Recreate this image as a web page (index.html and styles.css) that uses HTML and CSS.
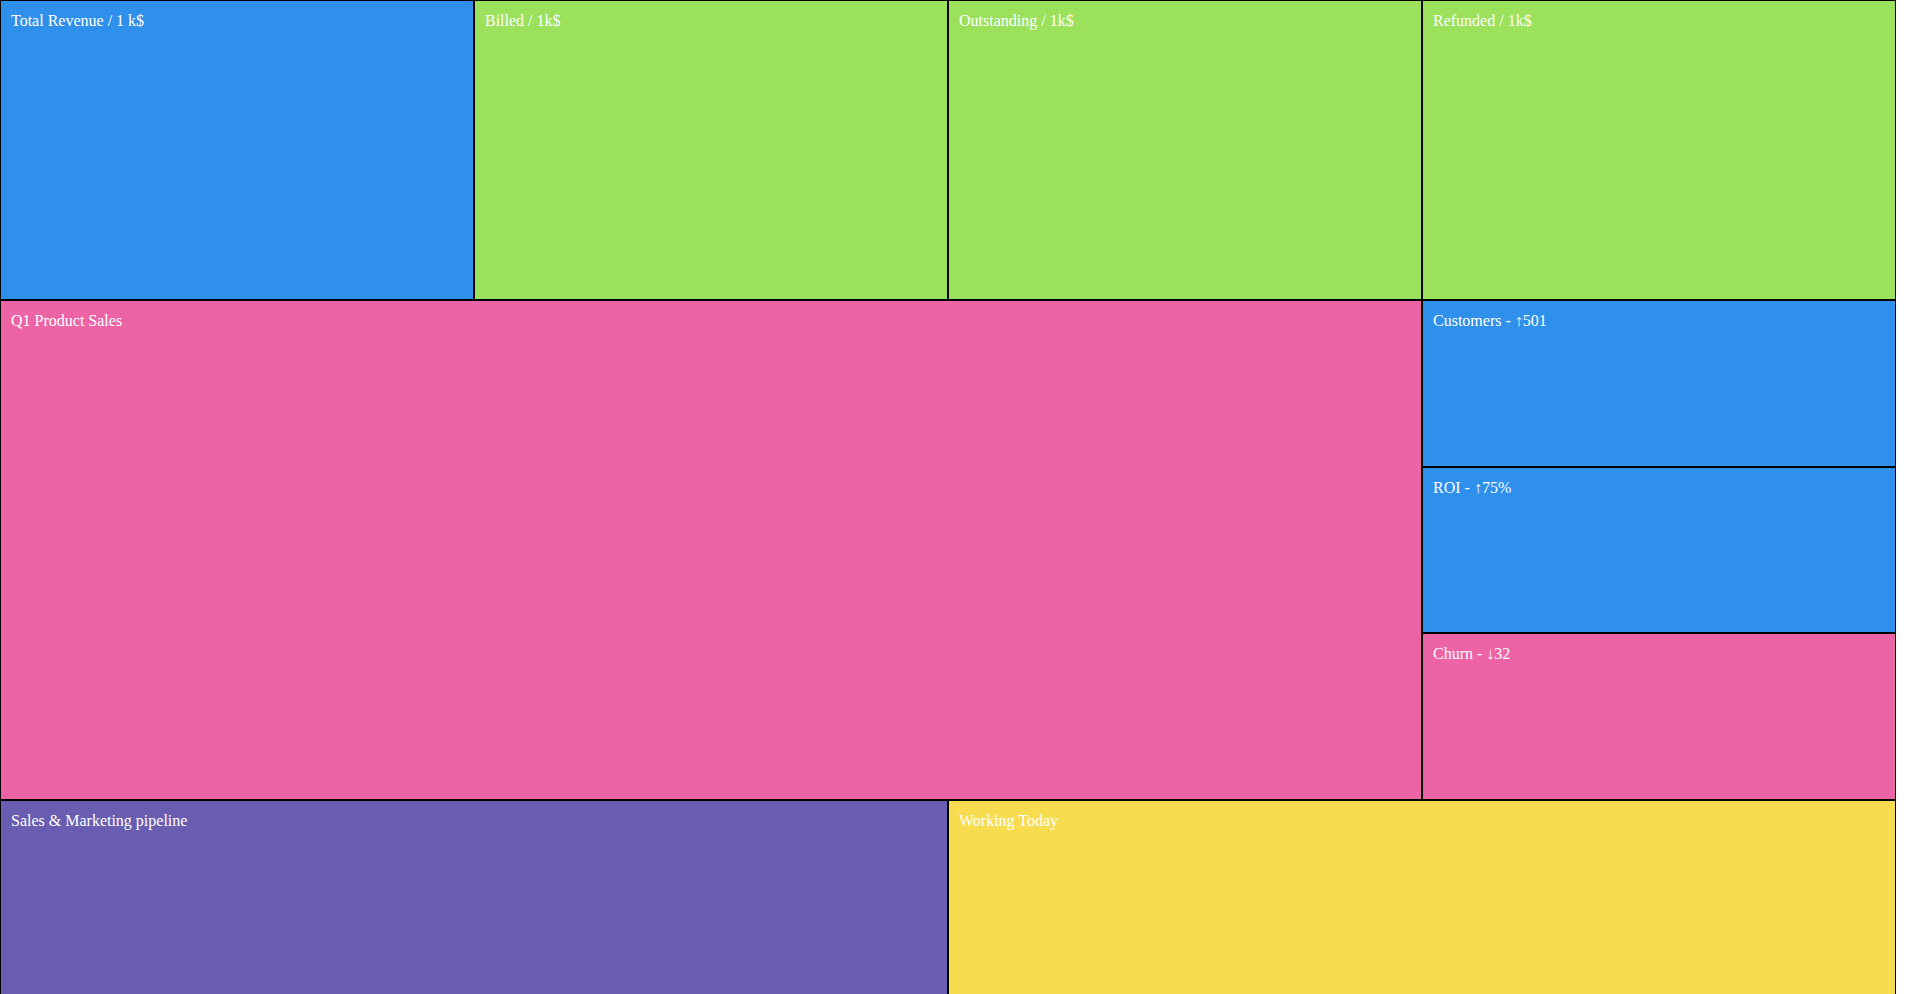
FILE: index.html
```html
<!DOCTYPE html>
<html>
<head>
<meta charset="utf-8">
<link rel="stylesheet" href="styles.css">
</head>
<body>
<div class="board">
  <div class="tile blue">Total Revenue / 1 k$</div>
  <div class="tile green">Billed / 1k$</div>
  <div class="tile green">Outstanding / 1k$</div>
  <div class="tile green">Refunded / 1k$</div>
  <div class="tile pink wide3">Q1 Product Sales</div>
  <div class="stack">
    <div class="tile blue">Customers - ↑501</div>
    <div class="tile blue">ROI - ↑75%</div>
    <div class="tile pink">Churn - ↓32</div>
  </div>
  <div class="tile purple wide2">Sales &amp; Marketing pipeline</div>
  <div class="tile yellow wide2">Working Today</div>
</div>
</body>
</html>
```
FILE: styles.css
```css
html, body {
  margin: 0;
  padding: 0;
  background: #ffffff;
}
body {
  font-family: "Liberation Serif", "Times New Roman", serif;
  font-size: 16px;
}
.board {
  width: 1896px;
  display: grid;
  grid-template-columns: repeat(4, 1fr);
  grid-template-rows: 300px 500px 300px;
}
.tile {
  box-sizing: border-box;
  border: 1px solid #000;
  padding: 11px 10px;
  color: #ffffff;
  min-height: 0;
  line-height: 18px;
}
.wide3 { grid-column: span 3; }
.wide2 { grid-column: span 2; }
.stack {
  display: flex;
  flex-direction: column;
}
.stack .tile { flex: 1 1 0; }
.blue { background: #2f90ec; }
.green { background: #9be15c; }
.pink { background: #ec64a5; }
.purple { background: #685db0; }
.yellow { background: #f8dc50; }
```
